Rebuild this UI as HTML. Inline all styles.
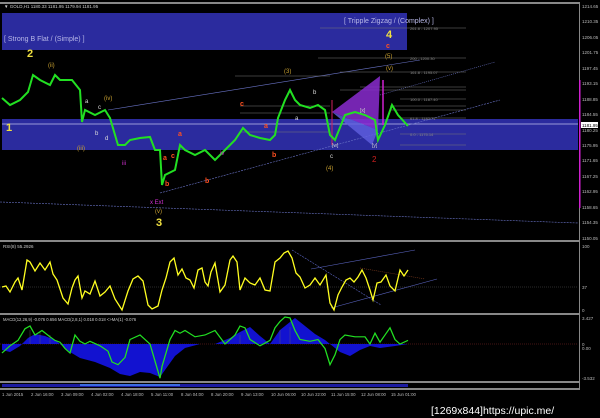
<!DOCTYPE html>
<html><head><meta charset="utf-8"><style>
html,body{margin:0;padding:0;background:#000;width:600px;height:418px;overflow:hidden}
svg{display:block}
text{font-family:"Liberation Sans",sans-serif}
</style></head><body>
<svg width="600" height="418" viewBox="0 0 600 418" xmlns="http://www.w3.org/2000/svg">
<rect width="600" height="418" fill="#000"/>
<rect x="0" y="2" width="580" height="2" fill="#888"/>
<rect x="579" y="2" width="1" height="387" fill="#888"/>
<rect x="0" y="240" width="580" height="2" fill="#888"/>
<rect x="0" y="313" width="580" height="2" fill="#888"/>
<rect x="0" y="381" width="580" height="2" fill="#888"/>
<rect x="0" y="388" width="580" height="2" fill="#888"/>
<rect x="2" y="13" width="405" height="37" fill="#2b2b9e"/>
<rect x="2" y="119" width="576" height="31" fill="#2b2b9e"/>
<line x1="2" y1="124" x2="578" y2="124" stroke="#9a9ad8" stroke-width="1"/>
<text x="4" y="8" font-size="4.5" fill="#ccc">▼ GOLD,H1  1180.33 1181.95 1179.94 1181.95</text>
<text x="4" y="41" font-size="7" fill="#b8b8e8">[ Strong B Flat / (Simple) ]</text>
<text x="344" y="23" font-size="7" fill="#b8b8e8">[ Tripple Zigzag / (Complex) ]</text>
<g font-size="4.5" fill="#bbb">
<text x="582" y="8">1214.65</text><text x="582" y="23">1210.35</text><text x="582" y="39">1206.05</text>
<text x="582" y="54">1201.75</text><text x="582" y="70">1197.45</text><text x="582" y="85">1193.15</text>
<text x="582" y="101">1188.85</text><text x="582" y="116">1184.55</text><text x="582" y="132">1180.25</text>
<text x="582" y="147">1175.95</text><text x="582" y="162">1171.65</text><text x="582" y="178">1167.25</text>
<text x="582" y="193">1162.95</text><text x="582" y="209">1158.65</text><text x="582" y="224">1154.35</text>
<text x="582" y="240">1150.05</text>
</g>
<rect x="581" y="122" width="17" height="6" fill="#fff"/><text x="582" y="127" font-size="4.5" fill="#000">1181.95</text>
<rect x="579" y="80" width="1.5" height="128" fill="#d020d0"/>
<g stroke="#6a74c8" stroke-width="0.6" fill="none">
<line x1="108" y1="110" x2="420" y2="60"/>
<line x1="160" y1="193" x2="500" y2="100" stroke-dasharray="2,1"/>
<line x1="0" y1="202" x2="578" y2="223" stroke-dasharray="2,1"/>
<line x1="380" y1="95" x2="495" y2="62" stroke-dasharray="1,1"/>
</g>
<g stroke="#777" stroke-width="0.5">
<line x1="235" y1="76" x2="330" y2="76"/><line x1="320" y1="28" x2="466" y2="28"/>
<line x1="318" y1="58" x2="466" y2="58"/><line x1="340" y1="72" x2="466" y2="72"/>
<line x1="360" y1="87" x2="466" y2="87"/><line x1="340" y1="90" x2="466" y2="90"/>
<line x1="400" y1="99" x2="466" y2="99"/><line x1="390" y1="106" x2="466" y2="106"/>
<line x1="390" y1="110" x2="466" y2="110"/><line x1="240" y1="106" x2="330" y2="106"/>
<line x1="240" y1="113" x2="330" y2="113"/><line x1="240" y1="132" x2="330" y2="132"/>
<line x1="400" y1="118" x2="466" y2="118"/><line x1="400" y1="134" x2="466" y2="134"/>
<line x1="400" y1="145" x2="466" y2="145"/>
</g>
<polygon points="332,112 380,76 378,130" fill="#8a2bd0" opacity="0.85"/>
<polygon points="332,112 378,130 372,145" fill="#6060e0" opacity="0.8"/>
<line x1="383" y1="80" x2="383" y2="125" stroke="#d020d0" stroke-width="1.5"/>
<line x1="332" y1="100" x2="332" y2="145" stroke="#d02060" stroke-width="1"/>
<polyline fill="none" stroke="#22e022" stroke-width="2" points="2,98 10,105 20,100 28,92 33,75 40,80 50,85 55,75 60,80 72,80 80,90 82,122 85,110 95,115 105,110 110,118 118,145 125,145 130,140 140,138 150,137 155,150 160,150 162,185 165,175 175,170 180,145 185,150 195,155 205,150 215,160 225,150 235,140 243,128 250,135 260,138 270,140 275,135 278,118 285,100 290,90 295,100 300,105 310,108 318,105 325,110 330,135 335,140 345,115 355,112 365,115 375,120 378,140 385,125 392,105 398,115 408,126"/>
<g font-size="11" font-weight="bold" fill="#f0e040"><text x="27" y="57">2</text><text x="6" y="131">1</text><text x="156" y="226">3</text><text x="386" y="38">4</text></g>
<g font-size="6" fill="#c8a030"><text x="48" y="67">(ii)</text><text x="104" y="100">(iv)</text><text x="77" y="150">(iii)</text><text x="155" y="213">(v)</text><text x="284" y="73">(3)</text><text x="385" y="58">(5)</text><text x="386" y="70">(v)</text><text x="326" y="170">(4)</text></g>
<g font-size="7" fill="#ff5020" font-weight="bold"><text x="178" y="136">a</text><text x="163" y="160">a</text><text x="171" y="158">c</text><text x="165" y="186">b</text><text x="205" y="183">b</text><text x="240" y="106">c</text><text x="264" y="128">a</text><text x="272" y="157">b</text><text x="386" y="48">c</text></g>
<g font-size="6" fill="#ddd"><text x="85" y="103">a</text><text x="98" y="109">c</text><text x="95" y="135">b</text><text x="105" y="140">d</text><text x="313" y="94">b</text><text x="330" y="158">c</text><text x="295" y="120">a</text></g>
<g font-size="6" fill="#d030d0"><text x="150" y="204">x Ext</text><text x="122" y="165">iii</text><text x="220" y="155">iv</text></g>
<text x="372" y="162" font-size="8" fill="#d02020">2</text>
<g font-size="5" fill="#ccc"><text x="332" y="147">[w]</text><text x="372" y="147">[y]</text><text x="360" y="112">[x]</text></g>
<g font-size="4" fill="#888"><text x="410" y="30">261.8 - 1207.95</text><text x="410" y="60">200 - 1200.30</text><text x="410" y="74">161.8 - 1195.07</text><text x="410" y="101">100.0 - 1187.40</text><text x="410" y="120">61.8 - 1182.71</text><text x="410" y="136">0.0 - 1175.14</text></g>
<!-- RSI -->
<text x="3" y="248" font-size="4.5" fill="#ccc">RSI(8) 55.2926</text>
<g font-size="4.5" fill="#bbb"><text x="582" y="248">100</text><text x="582" y="289">37</text><text x="582" y="312">0</text></g>
<line x1="0" y1="287" x2="578" y2="287" stroke="#555" stroke-dasharray="1,1" stroke-width="0.5"/>
<g stroke="#5a64c0" stroke-width="0.6" fill="none"><line x1="311" y1="269" x2="415" y2="250"/><line x1="331" y1="308" x2="437" y2="279"/><line x1="292" y1="250" x2="381" y2="305" stroke-dasharray="2,1"/><line x1="360" y1="268" x2="425" y2="279" stroke="#8a4020" stroke-dasharray="1,1"/></g>
<polyline fill="none" stroke="#ffff20" stroke-width="1.3" points="2,287 6,286 10,292 15,282 18,278 22,290 27,260 30,262 35,271 40,263 45,270 50,262 53,274 57,280 63,298 68,304 72,288 75,280 78,276 82,298 85,291 90,294 95,281 100,296 105,292 110,286 115,299 122,310 128,291 133,279 138,276 143,281 148,305 152,309 158,306 162,290 166,278 170,262 174,258 178,275 182,269 186,278 190,280 194,288 198,270 202,268 205,282 208,286 211,272 215,263 220,292 225,285 230,260 233,256 237,262 240,290 245,278 250,283 255,285 260,278 265,290 270,291 275,262 280,258 284,253 288,251 292,258 296,273 300,277 305,288 310,285 315,278 320,285 326,275 330,303 334,310 338,295 342,287 346,280 350,278 354,282 358,277 362,270 366,278 370,290 373,300 377,283 381,282 386,275 390,286 395,291 400,270 404,276 408,270"/>
<!-- MACD -->
<text x="3" y="321" font-size="4.2" fill="#ccc">MACD(12,26,9) -0.076 0.656  MACD(2,8,1) 0.018 0.018  &lt;&gt;MA(1) -0.076</text>
<g font-size="4.5" fill="#bbb"><text x="582" y="320">3.427</text><text x="582" y="346">0</text><text x="582" y="350">0.00</text><text x="582" y="380">-3.532</text></g>
<line x1="0" y1="344" x2="578" y2="344" stroke="#8a2a2a" stroke-dasharray="1,1" stroke-width="0.5"/>
<path d="M2,344 L2,350 10,352 20,346 28,338 35,334 45,336 55,340 60,344 70,352 80,358 95,362 110,368 120,374 130,376 140,372 150,373 160,377 165,370 175,356 185,348 200,344 215,344 230,338 240,332 250,327 260,336 270,344 280,330 290,322 295,318 305,326 315,334 325,340 330,344 340,352 350,356 360,350 370,346 380,348 395,346 408,344 Z" fill="#1212d0"/>
<g stroke="#666" stroke-width="0.4">
<line x1="30" y1="330" x2="30" y2="344"/><line x1="40" y1="332" x2="40" y2="344"/><line x1="50" y1="335" x2="50" y2="344"/><line x1="240" y1="335" x2="240" y2="344"/><line x1="280" y1="330" x2="280" y2="344"/><line x1="290" y1="327" x2="290" y2="344"/>
</g>
<polyline fill="none" stroke="#22e022" stroke-width="1.3" transform="matrix(1,0,0,0.9,0,20)" points="2,370 10,362 18,356 25,343 30,340 35,350 42,345 50,352 55,356 60,358 65,365 70,370 75,350 80,357 85,360 90,357 100,362 108,368 112,380 118,383 125,375 130,355 140,350 150,360 160,398 162,385 170,355 175,345 180,348 185,345 195,352 205,350 215,345 225,360 235,350 240,340 245,342 250,355 260,362 270,356 275,342 280,335 285,330 290,331 295,345 300,355 310,357 318,355 325,365 330,383 335,372 340,355 345,350 355,352 365,352 370,360 375,348 380,358 385,350 390,342 395,355 400,360 408,356"/>
<rect x="2" y="384" width="406" height="3" fill="#1a1aa0"/>
<rect x="80" y="384" width="100" height="2" fill="#3a6ae0"/>
<g font-size="4.3" fill="#bbb"><text x="2" y="396">1 Jun 2015</text><text x="31" y="396">2 Jun 16:00</text><text x="61" y="396">3 Jun 09:00</text><text x="91" y="396">4 Jun 02:00</text><text x="121" y="396">4 Jun 18:00</text><text x="151" y="396">5 Jun 11:00</text><text x="181" y="396">8 Jun 04:00</text><text x="211" y="396">8 Jun 20:00</text><text x="241" y="396">9 Jun 13:00</text><text x="271" y="396">10 Jun 06:00</text><text x="301" y="396">10 Jun 22:00</text><text x="331" y="396">11 Jun 15:00</text><text x="361" y="396">12 Jun 08:00</text><text x="391" y="396">15 Jun 01:00</text></g>
<text x="431" y="414" font-size="10.5" fill="#fff" font-family="Liberation Mono,monospace">[1269x844]https://upic.me/</text>
</svg>
</body></html>
